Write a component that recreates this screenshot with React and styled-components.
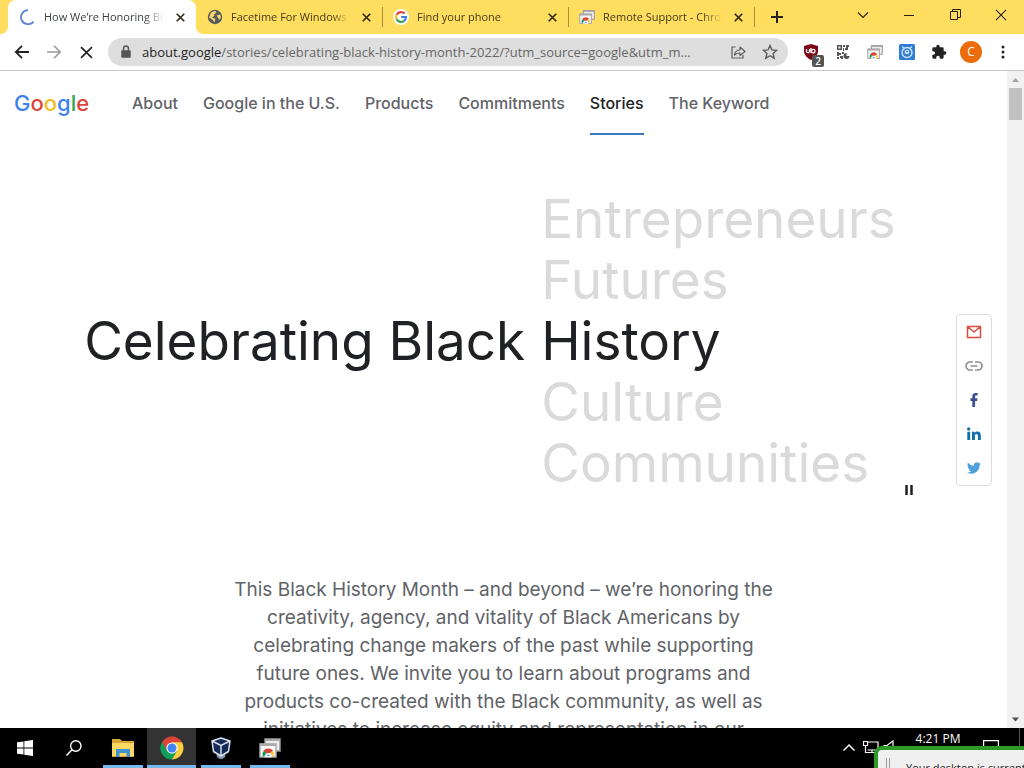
import React from "react";
import styled, { createGlobalStyle } from "styled-components";

const Global = createGlobalStyle`
  *, *::before, *::after { box-sizing: border-box; }
  body { margin: 0; background: #fff; }
  button { font: inherit; border: 0; padding: 0; background: none; color: inherit; }
  a { color: inherit; text-decoration: none; }
`;

const ui = `"Open Sans", "Noto Sans", sans-serif`;
const brand = `Inter, "Liberation Sans", sans-serif`;

const Desktop = styled.div`
  height: 100vh;
  min-height: 480px;
  display: flex;
  flex-direction: column;
  position: relative;
  overflow: hidden;
  font-family: ${ui};
`;

/* Tab strip */
const TabStrip = styled.header`
  flex: none;
  height: 34px;
  display: flex;
  background: #ffdd5f;
  padding-left: 8px;
  color: #45391a;
`;
const Tab = styled.div`
  position: relative;
  width: 186px;
  height: 34px;
  flex: 0 1 auto;
  display: flex;
  align-items: center;
  gap: 8px;
  padding: 0 8px 0 11px;
  font-size: 11px;
  border-radius: 8px 8px 0 0;
  background: ${(p) => (p.$active ? "#fff" : "transparent")};
  ${(p) =>
    p.$active &&
    `width: 188px; padding-left: 12px; color: #3c4043;
    &::before, &::after { content: ""; position: absolute; bottom: 0; width: 8px; height: 8px; }
    &::before { left: -8px; background: radial-gradient(circle at 0 0, transparent 8px, #fff 8px); }
    &::after { right: -8px; background: radial-gradient(circle at 100% 0, transparent 8px, #fff 8px); }`}
`;
const TabTitle = styled.span`
  flex: 1;
  min-width: 0;
  overflow: hidden;
  white-space: nowrap;
  line-height: 16px;
  mask-image: linear-gradient(to right, #000 84%, transparent);
`;
const TabClose = styled.button`
  width: 16px;
  height: 16px;
  display: grid;
  place-items: center;
  color: #2b2410;
`;
const TabRule = styled.span`
  width: 1px;
  height: 20px;
  margin: 7px -1px 0 0;
  background: #a68e3a;
`;
const NewTab = styled.button`
  width: 28px;
  height: 34px;
  margin-left: 9px;
  display: grid;
  place-items: center;
  color: #222;
`;
const WindowControls = styled.div`
  margin-left: auto;
  display: flex;
`;
const WindowButton = styled.button`
  width: 46px;
  height: 29px;
  display: grid;
  place-items: center;
  color: #222;
`;

/* Toolbar */
const Toolbar = styled.div`
  flex: none;
  height: 37px;
  display: flex;
  align-items: center;
  padding: 0 5px 0 6px;
  background: #fff;
  border-bottom: 1px solid #c8c8c8;
`;
const ToolButton = styled.button`
  position: relative;
  flex: none;
  width: 32px;
  height: 32px;
  display: grid;
  place-items: center;
  color: ${(p) => (p.$dim ? "#999" : "#222")};
`;
const Omnibox = styled.div`
  flex: 1;
  min-width: 0;
  height: 28px;
  margin: 0 7px 0 6px;
  padding-left: 10px;
  padding-right: 2px;
  display: flex;
  align-items: center;
  border-radius: 14px;
  background: #dedede;
  font-size: 13px;
  color: #666;
`;
const Address = styled.span`
  flex: 1;
  min-width: 0;
  margin-left: 8px;
  overflow: hidden;
  white-space: nowrap;
  text-overflow: ellipsis;
  b { font-weight: 400; color: #1f1f1f; }
`;
const Badge = styled.span`
  position: absolute;
  right: 3px;
  bottom: 1px;
  width: 12px;
  height: 12px;
  border-radius: 2px;
  background: #555;
  color: #fff;
  font-size: 10px;
  font-weight: 600;
  line-height: 12px;
  text-align: center;
`;
const Avatar = styled.span`
  width: 22px;
  height: 22px;
  border-radius: 50%;
  background: #ea6c0a;
  color: #fff;
  font-size: 12px;
  line-height: 22px;
  text-align: center;
`;

/* Web page */
const Viewport = styled.div`
  flex: 1;
  min-height: 0;
  display: flex;
`;
const Page = styled.div`
  position: relative;
  flex: 1;
  min-width: 0;
  overflow: hidden;
  font-family: ${brand};
  color: #5f6368;
  background: #fff;
`;
const SiteHeader = styled.div`
  height: 64px;
  display: flex;
  align-items: center;
  padding-left: 14px;
`;
const Logo = styled.a`
  width: 118px;
  font-size: 22px;
  font-weight: 500;
  line-height: 32px;
  color: #4081ec;
  i { font-style: normal; color: #e0443a; }
  u { text-decoration: none; color: #f4bd1b; }
  s { text-decoration: none; color: #37a455; }
  b { font-weight: inherit; }
`;
const Nav = styled.nav`
  display: flex;
  gap: 25px;
  height: 64px;
`;
const NavLink = styled.a`
  font-size: 16px;
  font-weight: 500;
  line-height: 64px;
  white-space: nowrap;
  color: ${(p) => (p.$active ? "#202124" : "#5f6368")};
  box-shadow: ${(p) => (p.$active ? "inset 0 -2px #3c78bd" : "none")};
`;
const Hero = styled.section`
  position: relative;
  margin-top: 54px;
  display: grid;
  grid-template-columns: 53fr 47fr;
  column-gap: 16px;
  align-items: center;
  font-size: 53px;
  line-height: 61px;
  white-space: nowrap;
`;
const HeroTitle = styled.h1`
  margin: 0;
  font: inherit;
  text-align: right;
  color: #202124;
`;
const WordList = styled.ul`
  margin: 0;
  padding: 0;
  list-style: none;
`;
const Word = styled.li`
  color: ${(p) => (p.$current ? "#202124" : "#dadada")};
`;
const PauseButton = styled.button`
  position: absolute;
  right: 90px;
  bottom: -4px;
  width: 16px;
  height: 16px;
  display: grid;
  place-items: center;
  color: #202124;
`;
const Intro = styled.p`
  margin: 82px auto 0;
  font-size: 19px;
  line-height: 28px;
  text-align: center;
  white-space: nowrap;
`;
const ShareBar = styled.aside`
  position: absolute;
  top: 243px;
  right: 15px;
  width: 36px;
  height: 172px;
  display: flex;
  flex-direction: column;
  border: 1px solid #dadce0;
  border-radius: 4px;
  background: #fff;
`;
const ShareLink = styled.a`
  flex: 1;
  display: grid;
  place-items: center;
`;
const ScrollTrack = styled.div`
  flex: none;
  width: 17px;
  display: flex;
  flex-direction: column;
  align-items: center;
  background: #f1f1f1;
`;
const ScrollThumb = styled.div`
  width: 13px;
  height: 32px;
  margin-bottom: auto;
  background: #c1c1c1;
`;

/* Taskbar */
const Taskbar = styled.footer`
  flex: none;
  height: 40px;
  display: flex;
  background: #000;
  color: #fff;
`;
const TaskButton = styled.button`
  width: 49px;
  height: 40px;
  display: grid;
  place-items: center;
  background: ${(p) => (p.$active ? "#333" : "#000")} ${(p) =>
  p.$app ? "linear-gradient(#76b9ed, #76b9ed) center bottom / " + (p.$active ? "100%" : "40px") + " 3px no-repeat" : ""};
`;
const Tray = styled.div`
  margin-left: auto;
  display: flex;
  padding-right: 4px;
`;
const TrayItem = styled.button`
  width: ${(p) => p.$width || 20}px;
  height: 40px;
  display: grid;
  place-items: center;
`;
const Clock = styled.time`
  width: 58px;
  margin-left: 8px;
  font-size: 12px;
  line-height: 21px;
  text-align: center;
  white-space: nowrap;
`;
const PeekEdge = styled.span`
  width: 1px;
  height: 40px;
  margin-left: 4px;
  background: #555;
`;
const Notice = styled.div`
  position: absolute;
  right: -8px;
  bottom: -18px;
  width: 158px;
  height: 40px;
  padding: 8px 0 0 8px;
  display: flex;
  gap: 16px;
  overflow: hidden;
  border: 4px solid #2f9a27;
  border-radius: 8px;
  background: #f0f0f0;
  color: #222;
  font-size: 11px;
  line-height: 20px;
  white-space: nowrap;
`;
const Grip = styled.span`
  flex: none;
  width: 4px;
  height: 24px;
  border: solid #999;
  border-width: 0 1px;
`;

const Svg = ({ w = 16, h, box = "0 0 16 16", children, ...rest }) => (
  <svg width={w} height={h || w} viewBox={box} fill="none" stroke="currentColor" strokeWidth="1.5" aria-hidden="true" {...rest}>
    {children}
  </svg>
);
const Cross = ({ size = 8, weight = 1.8 }) => (
  <Svg w={size} box="0 0 10 10" strokeWidth={weight}><path d="M.8.8l8.4 8.4M9.2.8L.8 9.2" /></Svg>
);
const GoogleG = () => (
  <Svg stroke="none">
    <circle cx="8" cy="8" r="8" fill="#fff" />
    <g fill="none" strokeWidth="2.2">
      <path d="M11.6 4.6A5 5 0 0 0 3.6 5.7" stroke="#e0443a" />
      <path d="M3.6 5.7a5 5 0 0 0 0 4.6" stroke="#f4bd1b" />
      <path d="M3.6 10.3a5 5 0 0 0 7.6 1.5" stroke="#37a455" />
      <path d="M11.2 11.8A5 5 0 0 0 13 8H8.2" stroke="#4081ec" />
    </g>
  </Svg>
);
const ChromeBall = ({ size = 24 }) => (
  <Svg w={size} box="0 0 24 24" stroke="none">
    <path d="M12 12L2.1 6.3A11.4 11.4 0 0 1 21.9 6.3Z" fill="#db4437" />
    <path d="M12 12L21.9 6.3A11.4 11.4 0 0 1 12 23.4Z" fill="#ffcd40" />
    <path d="M12 12V23.4A11.4 11.4 0 0 1 2.1 6.3Z" fill="#0f9d58" />
    <path d="M12 6.3h9.9L17 15 12 23.4 12 12Z" fill="#ffcd40" />
    <path d="M2.1 6.3L7 14.9 12 12V6.3Z" fill="#db4437" />
    <path d="M2.1 6.3l5 8.6L12 17.5l5-2.6-5 8.5A11.4 11.4 0 0 1 2.1 6.3Z" fill="#0f9d58" />
    <circle cx="12" cy="12" r="5.6" fill="#fff" />
    <circle cx="12" cy="12" r="4.5" fill="#4285f4" />
  </Svg>
);
const RemoteIcon = ({ size = 16 }) => (
  <Svg w={size} box="0 0 22 20" stroke="none">
    <path d="M6 1h15v12H6z" fill="#eee" stroke="#999" />
    <path d="M6 1h15v2H6z" fill="#aaa" />
    <path d="M1 6h16v13H1z" fill="#f8f8f8" stroke="#aaa" />
    <path d="M1 5.5h16V8H1z" fill="#aaa" />
    <path d="M4 18.500a5 5 0 0 1 1-5.700l4 3.700z" fill="#0f9d58" />
    <path d="M4.600 13a5.600 5.600 0 0 1 9.400 0L9 16.500z" fill="#db4437" />
    <path d="M13.600 12.600a5.400 5.400 0 0 1 .9 5.900H9.500z" fill="#ffcd40" />
    <path d="M6.400 18.500a2.800 2.800 0 1 1 5.600 0z" fill="#4285f4" stroke="#fff" />
  </Svg>
);

const words = ["Entrepreneurs", "Futures", "History", "Culture", "Communities"];
const links = ["About", "Google in the U.S.", "Products", "Commitments", "Stories", "The Keyword"];

const tabs = [
  { title: "How We’re Honoring Bl", active: true, icon: <Svg><path d="M13.5 12.6A7 7 0 1 1 8 1.2" stroke="#5d84d6" strokeWidth="1.8" /></Svg> },
  { title: "Facetime For Windows", icon: (
    <Svg stroke="none"><circle cx="8" cy="8" r="7.2" fill="#56585c" /><path d="M4 3.5l4-1.7 1.5 1.7L7 5.2l.5 1.6L5 8.4l3.4 1.4-.7 3.6-2.2-2.6L2 8.6zM9.5 6.5l3.5-1 1 2.5-1.5 3-1.700-2.500z" fill="#f5d66a" /></Svg>
  ) },
  { title: "Find your phone", icon: <GoogleG />, rule: true },
  { title: "Remote Support - Chro", icon: <RemoteIcon />, rule: true },
];

export default function App() {
  return (
    <Desktop>
      <Global />
      <TabStrip>
        {tabs.map((t) => (
          <React.Fragment key={t.title}>
            {t.rule && <TabRule />}
            <Tab $active={t.active}>
              {t.icon}
              <TabTitle>{t.title}</TabTitle>
              <TabClose aria-label="Close tab"><Cross size={9} /></TabClose>
            </Tab>
          </React.Fragment>
        ))}
        <TabRule />
        <NewTab aria-label="New tab"><Svg w={12} box="0 0 12 12" strokeWidth="2"><path d="M6 0v12M0 6h12" /></Svg></NewTab>
        <WindowControls>
          <WindowButton aria-label="Search tabs"><Svg w={12} box="0 0 12 12" strokeWidth="1.1"><path d="M1 3.5l5 5 5-5" /></Svg></WindowButton>
          <WindowButton aria-label="Minimize"><Svg w={10} box="0 0 10 10" strokeWidth="1"><path d="M0 5.5h10" /></Svg></WindowButton>
          <WindowButton aria-label="Restore"><Svg w={11} box="0 0 11 11" strokeWidth="1"><path d="M.5 2.5h7v8h-7zM2.5 2.5v-2h8v8h-3" /></Svg></WindowButton>
          <WindowButton aria-label="Close window"><Cross size={12} weight={0.9} /></WindowButton>
        </WindowControls>
      </TabStrip>

      <Toolbar>
        <ToolButton aria-label="Back"><Svg strokeWidth="1.8"><path d="M15 8H2M8 1.8L1.8 8 8 14.2" /></Svg></ToolButton>
        <ToolButton $dim aria-label="Forward"><Svg strokeWidth="1.6"><path d="M1 8h13M8 1.8L14.2 8 8 14.2" /></Svg></ToolButton>
        <ToolButton aria-label="Stop"><Cross size={13} weight={1.3} /></ToolButton>
        <Omnibox>
          <Svg><path d="M4 7h8v6H4z" fill="#555" stroke="#555" strokeLinejoin="round" /><path d="M5.6 7V4.500a2.400 2.400 0 0 1 4.800 0V7" stroke="#555" /></Svg>
          <Address><b>about.google</b>/stories/celebrating-black-history-month-2022/?utm_source=google&amp;utm_m...</Address>
          <ToolButton aria-label="Share"><Svg stroke="#5c5c5c" strokeWidth="1.2"><path d="M5.5 3H2v11h11v-3M4.5 11c.5-3.500 2.500-5 5.500-5V3l5 4.500-5 4V9c-2.500 0-4 .5-5.500 2z" strokeLinejoin="round" /></Svg></ToolButton>
          <ToolButton aria-label="Bookmark"><Svg stroke="#5c5c5c" strokeWidth="1.4"><path d="M8 1.5l1.900 4.400 4.800.4-3.600 3.200 1.100 4.700L8 11.700l-4.200 2.500 1.100-4.700L1.300 6.300l4.800-.4z" /></Svg></ToolButton>
        </Omnibox>
        <ToolButton aria-label="uBlock Origin">
          <Svg stroke="none"><path d="M8 0l7 2v5c0 4-3 7-7 9-4-2-7-5-7-9V2z" fill="#7c0716" /><path d="M3.500 5v2.200a1.500 1.500 0 0 0 3 0V5M8 4v5" stroke="#fff" strokeWidth="1.300" /><circle cx="10.300" cy="7.200" r="1.800" stroke="#fff" strokeWidth="1.300" /></Svg>
          <Badge>2</Badge>
        </ToolButton>
        <ToolButton aria-label="QR code"><Svg stroke="none" fill="#555"><path fillRule="evenodd" d="M2 1h5v5H2zm1.500 1.500v2h2v-2zM8 1h2v2H8zM11 1h3v2h-1v3h-3V4h1zM8 4h1v3H8zM2 8h2v1h2v2H4v1H2zM7 8h2v2H7zM2 13h2v2H2zM5 12h3v3H6v-1H5zM14.500 12a3 3 0 1 1-3-3v3z" /></Svg></ToolButton>
        <ToolButton aria-label="Remote desktop"><RemoteIcon /></ToolButton>
        <ToolButton aria-label="Extension"><Svg stroke="none"><rect width="16" height="16" rx="1.5" fill="#2f7bd8" /><circle cx="8" cy="8.500" r="5" stroke="#cfe3fb" strokeWidth="1.400" /><path d="M3 2.500l3 2.500M13 2.500L10 5" stroke="#cfe3fb" strokeWidth="1.200" /><circle cx="8" cy="8" r="2.300" fill="#e6f1ff" /><circle cx="8" cy="7.500" r="1" fill="#2f7bd8" /></Svg></ToolButton>
        <ToolButton aria-label="Extensions"><Svg box="0 0 24 24" stroke="none" fill="#222"><path d="M20.500 11H19V7a2 2 0 0 0-2-2h-4V3.500a2.500 2.500 0 0 0-5 0V5H4a2 2 0 0 0-2 2v3.800h1.500a2.700 2.700 0 0 1 0 5.400H2V20a2 2 0 0 0 2 2h3.800v-1.500a2.700 2.700 0 0 1 5.400 0V22H17a2 2 0 0 0 2-2v-4h1.500a2.500 2.500 0 0 0 0-5z" /></Svg></ToolButton>
        <ToolButton aria-label="Profile"><Avatar>C</Avatar></ToolButton>
        <ToolButton aria-label="Menu"><Svg stroke="none" fill="#222"><circle cx="8" cy="3" r="1.5" /><circle cx="8" cy="8" r="1.5" /><circle cx="8" cy="13" r="1.5" /></Svg></ToolButton>
      </Toolbar>

      <Viewport>
        <Page>
          <SiteHeader>
            <Logo href="#">G<i>o</i><u>o</u><b>g</b><s>l</s><i>e</i></Logo>
            <Nav>
              {links.map((l) => <NavLink key={l} href="#" $active={l === "Stories"}>{l}</NavLink>)}
            </Nav>
          </SiteHeader>
          <Hero>
            <HeroTitle>Celebrating Black</HeroTitle>
            <WordList>
              {words.map((w) => <Word key={w} $current={w === "History"}>{w}</Word>)}
            </WordList>
            <PauseButton aria-label="Pause"><Svg w={8} h={10} box="0 0 8 10" strokeWidth="2.5"><path d="M1.5 0v10M6.5 0v10" /></Svg></PauseButton>
          </Hero>
          <Intro>
            This Black History Month – and beyond – we’re honoring the<br />
            creativity, agency, and vitality of Black Americans by<br />
            celebrating change makers of the past while supporting<br />
            future ones. We invite you to learn about programs and<br />
            products co-created with the Black community, as well as<br />
            initiatives to increase equity and representation in our
          </Intro>
          <ShareBar>
            <ShareLink href="#" aria-label="Email"><Svg stroke="#dc4a3d" strokeWidth="1.5"><path d="M1.5 2.5h13v11h-13zM2 3l6 5 6-5" strokeLinejoin="round" /></Svg></ShareLink>
            <ShareLink href="#" aria-label="Copy link"><Svg w={18} h={10} box="0 0 18 10" stroke="#919191" strokeWidth="1.7"><path d="M8 1H5a4 4 0 0 0 0 8h3M10 1h3a4 4 0 0 1 0 8h-3M5.5 5h7" /></Svg></ShareLink>
            <ShareLink href="#" aria-label="Facebook"><Svg stroke="none" fill="#3b5190"><path d="M6.3 15V8.900H4.500V6.300h1.800V4.500C6.300 2.300 7.500 1 9.600 1h2v2.600h-1.300c-.9 0-1.200.4-1.200 1.200v1.500h2.400l-.4 2.600h-2V15z" /></Svg></ShareLink>
            <ShareLink href="#" aria-label="LinkedIn"><Svg stroke="none" fill="#1371a9"><circle cx="2.7" cy="3" r="1.7" /><path d="M1.300 5.800h2.900V14H1.300zM6 5.800h2.700v1.100c.6-.9 1.500-1.300 2.600-1.300 2.500 0 3.500 1.500 3.500 4.100V14h-2.900v-3.900c0-1.300-.4-2-1.400-2-1.100 0-1.600.8-1.600 2V14H6z" /></Svg></ShareLink>
            <ShareLink href="#" aria-label="Twitter"><Svg w={14} box="0 0 24 24" stroke="none" fill="#4f9fd8"><path d="M24 4.600a10 10 0 0 1-2.800.8 5 5 0 0 0 2.100-2.700 10 10 0 0 1-3.100 1.200A4.900 4.900 0 0 0 11.800 8.400 14 14 0 0 1 1.700 3.200a4.900 4.900 0 0 0 1.500 6.600 4.900 4.900 0 0 1-2.200-.6 4.900 4.900 0 0 0 3.900 4.900 4.900 4.900 0 0 1-2.200.1 4.900 4.900 0 0 0 4.600 3.400A9.900 9.900 0 0 1 0 19.500 14 14 0 0 0 21.500 7.100 10 10 0 0 0 24 4.600z" /></Svg></ShareLink>
          </ShareBar>
        </Page>
        <ScrollTrack>
          <Svg w={17} box="0 0 17 17" stroke="none" fill="#a3a3a3"><path d="M5 11l3.500-4L12 11z" /></Svg>
          <ScrollThumb />
          <Svg w={17} box="0 0 17 17" stroke="none" fill="#505050"><path d="M5 6.5l3.500 4 3.500-4z" /></Svg>
        </ScrollTrack>
      </Viewport>

      <Taskbar>
        <TaskButton aria-label="Start"><Svg stroke="none" fill="#fff"><path d="M0 2.300l6.500-.9v6.100H0zM7.300 1.300L16 0v7.500H7.300zM0 8.400h6.500v6.200L0 13.700zM7.300 8.400H16V16l-8.700-1.200z" /></Svg></TaskButton>
        <TaskButton aria-label="Search"><Svg><circle cx="9.8" cy="6" r="5.2" strokeWidth="1.4" /><path d="M6 9.800L.5 15.500" /></Svg></TaskButton>
        <TaskButton $app aria-label="File Explorer"><Svg w={22} h={18} box="0 0 22 18" stroke="none"><path d="M0 0h8l2 2h12v16H0z" fill="#d9a336" /><path d="M0 4h22v13H0z" fill="#fbd866" /><path d="M4 10h14v8h-3.500v-4h-7v4H4z" fill="#4193cf" /></Svg></TaskButton>
        <TaskButton $app $active aria-label="Chrome"><ChromeBall /></TaskButton>
        <TaskButton $app aria-label="VirtualBox"><Svg w={22} box="0 0 22 22" strokeWidth="1.5" stroke="#d9e1ee"><path d="M7.500 17v2.500L11 22l3.500-2.500V17" fill="#8393ac" stroke="#8393ac" /><path d="M2 4l9-3 9 3-1.500 10.500L11 19l-7.500-4.500z" fill="#142b58" strokeLinejoin="round" /><path d="M2 4l9 4.500L20 4M11 8.500V19" /></Svg></TaskButton>
        <TaskButton $app aria-label="Remote Desktop"><RemoteIcon size={22} /></TaskButton>
        <Tray>
          <TrayItem $width={24} aria-label="Show hidden icons"><Svg w={12} box="0 0 12 12"><path d="M.5 8.500L6 3l5.500 5.500" /></Svg></TrayItem>
          <TrayItem aria-label="Network"><Svg strokeWidth="1.2"><path d="M5 2h10v8H4.500M.5 1.500h4v4h-4zM2.500 5.500v7h10M9 10v3" /></Svg></TrayItem>
          <TrayItem aria-label="Volume"><Svg strokeWidth="1.2"><path d="M1 5.500h3L10 1v14l-6-4.500H1z" /></Svg></TrayItem>
          <Clock>4:21 PM</Clock>
          <TrayItem $width={48} aria-label="Notifications"><Svg strokeWidth="1.2"><path d="M.6.6h14.800v11H10l-2 2-2-2H.6z" /></Svg></TrayItem>
          <PeekEdge />
        </Tray>
      </Taskbar>
      <Notice><Grip /><span>Your desktop is currently shared</span></Notice>
    </Desktop>
  );
}
